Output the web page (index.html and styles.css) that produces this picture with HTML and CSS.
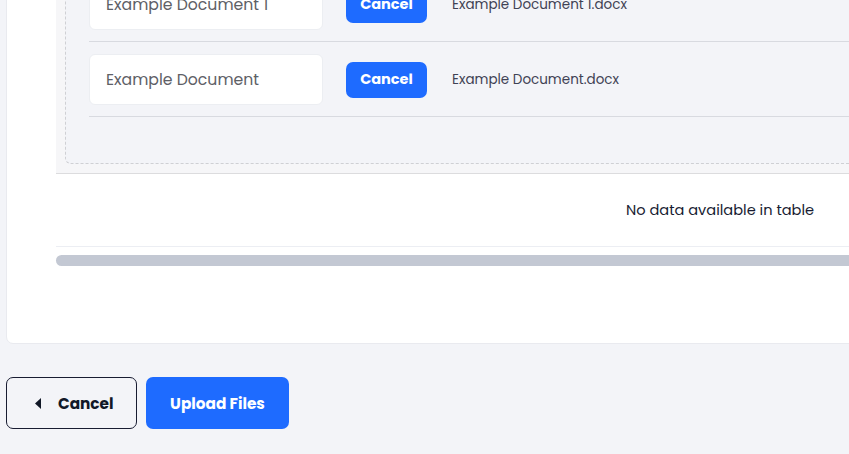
FILE: index.html
```html
<!DOCTYPE html>
<html lang="en">
<head>
<meta charset="UTF-8" />
<meta name="viewport" content="width=device-width, initial-scale=1" />
<title>Upload Files</title>
<link rel="stylesheet" href="styles.css">
</head>
<body>

<div class="card">
  <div class="table-wrap">
    <div class="details">
      <div class="dropzone">
        <div class="file-row">
          <input class="doc-name" type="text" value="Example Document 1" />
          <button class="btn-blue btn-sm" type="button">Cancel</button>
          <span class="file-name">Example Document 1.docx</span>
        </div>
        <div class="file-row">
          <input class="doc-name" type="text" value="Example Document" />
          <button class="btn-blue btn-sm" type="button">Cancel</button>
          <span class="file-name">Example Document.docx</span>
        </div>
      </div>
    </div>
    <div class="empty-row">No data available in table</div>
    <div class="scrollbar"></div>
  </div>
</div>

<div class="actions">
  <button class="btn-outline" type="button">
    <svg width="7" height="11" viewBox="0 0 7 11"><path d="M6 0 L0 5.5 L6 11 Z" fill="#111827"/></svg>
    Cancel
  </button>
  <button class="btn-blue btn-lg" type="button">Upload Files</button>
</div>

</body>
</html>
```

FILE: styles.css
```css
body {
  margin: 0;
  background: #f3f4f8;
  font-family: 'Poppins', 'Inter', sans-serif;
  color: #181c32;
  overflow: hidden;
  height: 454px;
}
.card {
  margin: -68px 0 0 6px;
  width: 1400px;
  background: #fff;
  border: 1px solid #e9eaef;
  border-radius: 7px;
  padding: 0 0 77px 49px;
}
.table-wrap {
  width: 1328px;
}
.details {
  background: #f6f6f8;
  padding: 9px;
  border-bottom: 1px solid #dcdcde;
}
.dropzone {
  background: #f3f4f8;
  border: 1px dashed #cfd0d4;
  border-radius: 6px;
  padding: 24px 0 46px 23px;
}
.file-row {
  display: flex;
  align-items: center;
  padding: 12px 0 11px;
  border-bottom: 1px solid #d8dae0;
}
.doc-name {
  width: 234px;
  height: 51px;
  box-sizing: border-box;
  border: 1px solid #eceef2;
  border-radius: 6px;
  background: #fff;
  padding: 0 16px;
  font-family: inherit;
  font-size: 15.7px;
  color: #5e6066;
  outline: none;
}
.btn-blue {
  background: #1e6bff;
  color: #fff;
  border: none;
  font-family: inherit;
  font-weight: 700;
  cursor: pointer;
}
.btn-sm {
  margin-left: 23px;
  width: 81px;
  height: 36px;
  border-radius: 7px;
  font-size: 14.5px;
}
.file-name {
  margin-left: 25px;
  font-size: 13.5px;
  color: #3f4254;
}
.empty-row {
  height: 72px;
  line-height: 72px;
  text-align: center;
  font-size: 14.6px;
  border-bottom: 1px solid #eceef3;
}
.scrollbar {
  margin-top: 8px;
  height: 11px;
  border-radius: 6px;
  background: #c3c8d3;
}
.actions {
  display: flex;
  gap: 9px;
  margin: 33px 0 0 6px;
}
.btn-outline {
  display: flex;
  align-items: center;
  gap: 16px;
  width: 131px;
  height: 52px;
  padding: 0 0 0 28px;
  background: transparent;
  border: 1px solid #181c32;
  border-radius: 7px;
  font-family: inherit;
  font-size: 15.3px;
  font-weight: 700;
  color: #111827;
  cursor: pointer;
}
.btn-lg {
  width: 143px;
  height: 52px;
  border-radius: 7px;
  font-size: 15.3px;
}
```
